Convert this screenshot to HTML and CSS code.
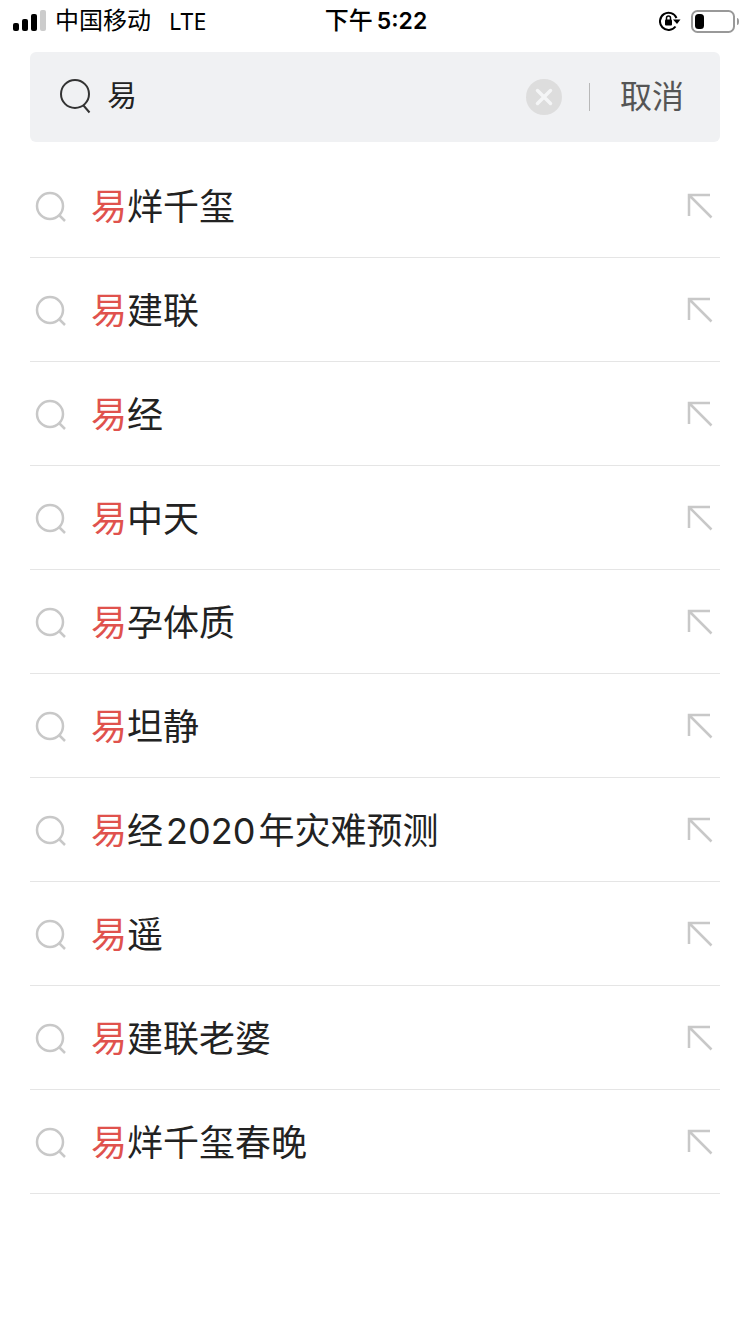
FILE: index.html
```html
<!DOCTYPE html>
<html lang="zh-CN">
<head>
<meta charset="utf-8">
<meta name="viewport" content="width=device-width, initial-scale=1">
<title>搜索</title>
<link rel="stylesheet" href="styles.css">
</head>
<body>
<svg class="symbols" aria-hidden="true">
  <symbol id="magnifier" viewBox="0 0 32 32"><circle cx="15" cy="15" r="13"/><path d="M24 24l6 6"/></symbol>
  <symbol id="fill-arrow" viewBox="0 0 26 26"><path d="M2 23V2H23M2 2L24.500 24.500"/></symbol>
</svg>
<header class="status">
  <div class="status-left">
    <svg class="signal" viewBox="0 0 33 22" aria-hidden="true"><rect x="0" y="13" width="6" height="8" rx="2"/><rect x="9" y="9" width="6" height="12" rx="2"/><rect x="18" y="4" width="6" height="17" rx="2"/><rect class="signal-off" x="27" y="0" width="6" height="21" rx="2"/></svg>
    <span class="carrier">中国移动</span>
    <span class="network">LTE</span>
  </div>
  <div class="time"><span>下午</span><span class="clock">5:22</span></div>
  <div class="status-right">
    <svg class="lock" viewBox="0 0 22 20" aria-hidden="true"><path class="lock-ring" d="M16.500 15.500A8.600 8.600 0 1 1 17.500 7"/><path d="M14 8.500h7.500L18 13z"/><rect x="6" y="8.500" width="7" height="6" rx="1"/><path class="lock-bow" d="M7.500 9V7a2 2 0 0 1 4 0v2"/></svg>
    <svg class="battery" viewBox="0 0 48 23" aria-hidden="true"><rect class="battery-case" x="1" y="1" width="42" height="21" rx="5.500"/><rect x="4" y="4" width="9" height="15" rx="3.500"/><path class="battery-tip" d="M46 8q2 0 2 3.500T46 15z"/></svg>
  </div>
</header>
<main>
  <form class="search" role="search">
    <label class="search-label" for="query"><svg class="search-icon" viewBox="0 0 32 36" role="img" aria-label="搜索"><circle cx="15" cy="15" r="14"/><path d="M23.500 26.500L29.500 33.500"/></svg></label>
    <input class="query" id="query" type="text" value="易">
    <button class="clear" type="reset" aria-label="清除"><svg viewBox="0 0 36 36"><circle cx="18" cy="18" r="18"/><path d="M11.500 11.500l13 13m0-13l-13 13"/></svg></button>
    <button class="cancel" type="button">取消</button>
  </form>
  <ul class="suggestions">
    <li class="row"><a class="suggestion" href="#"><svg class="row-icon"><use href="#magnifier"/></svg><span><em class="match">易</em>烊千玺</span></a><button class="fill" type="button" aria-label="填入"><svg><use href="#fill-arrow"/></svg></button></li>
    <li class="row"><a class="suggestion" href="#"><svg class="row-icon"><use href="#magnifier"/></svg><span><em class="match">易</em>建联</span></a><button class="fill" type="button" aria-label="填入"><svg><use href="#fill-arrow"/></svg></button></li>
    <li class="row"><a class="suggestion" href="#"><svg class="row-icon"><use href="#magnifier"/></svg><span><em class="match">易</em>经</span></a><button class="fill" type="button" aria-label="填入"><svg><use href="#fill-arrow"/></svg></button></li>
    <li class="row"><a class="suggestion" href="#"><svg class="row-icon"><use href="#magnifier"/></svg><span><em class="match">易</em>中天</span></a><button class="fill" type="button" aria-label="填入"><svg><use href="#fill-arrow"/></svg></button></li>
    <li class="row"><a class="suggestion" href="#"><svg class="row-icon"><use href="#magnifier"/></svg><span><em class="match">易</em>孕体质</span></a><button class="fill" type="button" aria-label="填入"><svg><use href="#fill-arrow"/></svg></button></li>
    <li class="row"><a class="suggestion" href="#"><svg class="row-icon"><use href="#magnifier"/></svg><span><em class="match">易</em>坦静</span></a><button class="fill" type="button" aria-label="填入"><svg><use href="#fill-arrow"/></svg></button></li>
    <li class="row"><a class="suggestion" href="#"><svg class="row-icon"><use href="#magnifier"/></svg><span><em class="match">易</em>经<span class="digits">2020</span>年灾难预测</span></a><button class="fill" type="button" aria-label="填入"><svg><use href="#fill-arrow"/></svg></button></li>
    <li class="row"><a class="suggestion" href="#"><svg class="row-icon"><use href="#magnifier"/></svg><span><em class="match">易</em>遥</span></a><button class="fill" type="button" aria-label="填入"><svg><use href="#fill-arrow"/></svg></button></li>
    <li class="row"><a class="suggestion" href="#"><svg class="row-icon"><use href="#magnifier"/></svg><span><em class="match">易</em>建联老婆</span></a><button class="fill" type="button" aria-label="填入"><svg><use href="#fill-arrow"/></svg></button></li>
    <li class="row"><a class="suggestion" href="#"><svg class="row-icon"><use href="#magnifier"/></svg><span><em class="match">易</em>烊千玺春晚</span></a><button class="fill" type="button" aria-label="填入"><svg><use href="#fill-arrow"/></svg></button></li>
  </ul>
</main>
</body>
</html>
```

FILE: styles.css
```css
* { box-sizing: border-box; }
body {
  margin: 0;
  background: #fff;
  color: #222;
  font-family: Inter, "Noto Sans CJK SC", sans-serif;
}
button { border: 0; padding: 0; background: none; color: inherit; font: inherit; }
svg { display: block; }
.symbols { position: absolute; width: 0; height: 0; }

.status {
  display: grid;
  grid-template-columns: 1fr auto 1fr;
  align-items: center;
  height: 40px;
  padding: 0 11px 0 13px;
  color: #000;
  font-size: 24px;
  line-height: 42px;
}
.status-left, .status-right, .time { display: flex; align-items: center; }
.signal { width: 33px; height: 22px; margin-right: 9px; }
.signal-off { fill: #ccc; }
.network { margin-left: 18px; font-family: "Noto Sans", sans-serif; font-size: 23px; line-height: 40px; }
.time { gap: 4px; font-weight: 500; }
.clock { font-size: 23px; font-weight: 600; }
.status-right { justify-content: flex-end; gap: 10px; }
.lock { width: 22px; height: 20px; }
.lock-ring { fill: none; stroke: #000; stroke-width: 2; }
.lock-bow { fill: none; stroke: #000; stroke-width: 1.5; }
.battery { width: 48px; height: 23px; }
.battery-case { fill: none; stroke: #999; stroke-width: 2; }
.battery-tip { fill: #999; }

main { padding: 12px 30px; }
.search {
  display: flex;
  align-items: center;
  height: 90px;
  padding: 0 36px 0 30px;
  border-radius: 6px;
  background: #f0f1f3;
}
.search-icon { width: 32px; height: 36px; fill: none; stroke: #333; stroke-width: 2; }
.query {
  flex: 1;
  min-width: 0;
  height: 60px;
  margin: 0 16px 0 15px;
  padding: 0 0 8px;
  border: 0;
  outline: 0;
  background: none;
  color: #222;
  font: inherit;
  font-size: 30px;
}
.clear { width: 36px; height: 36px; margin-right: 27px; }
.clear svg { fill: #ddd; stroke-linecap: round; }
.clear path { stroke: #f4f5f6; stroke-width: 3.5; }
.cancel {
  display: flex;
  align-items: center;
  color: #555;
  font-size: 32px;
  line-height: 42px;
}
.cancel::before { content: ""; width: 1px; height: 28px; margin-right: 30px; background: #b8b8b8; }

.suggestions { margin: 12px 0 0; padding: 0; list-style: none; }
.row {
  display: flex;
  align-items: center;
  height: 104px;
  padding: 0 7px 0 5px;
  border-bottom: 1px solid #e5e5e5;
}
.suggestion {
  display: flex;
  flex: 1;
  align-items: center;
  gap: 24px;
  padding-top: 2px;
  color: #222;
  font-size: 36px;
  line-height: 56px;
  text-decoration: none;
}
.row-icon { width: 32px; height: 32px; fill: none; stroke: #c8c8c8; stroke-width: 2.5; }
.match { color: #e0524d; font-style: normal; }
.digits { margin: 0 3px; }
.fill svg { width: 26px; height: 26px; fill: none; stroke: #c8c8c8; stroke-width: 2.5; }
```
